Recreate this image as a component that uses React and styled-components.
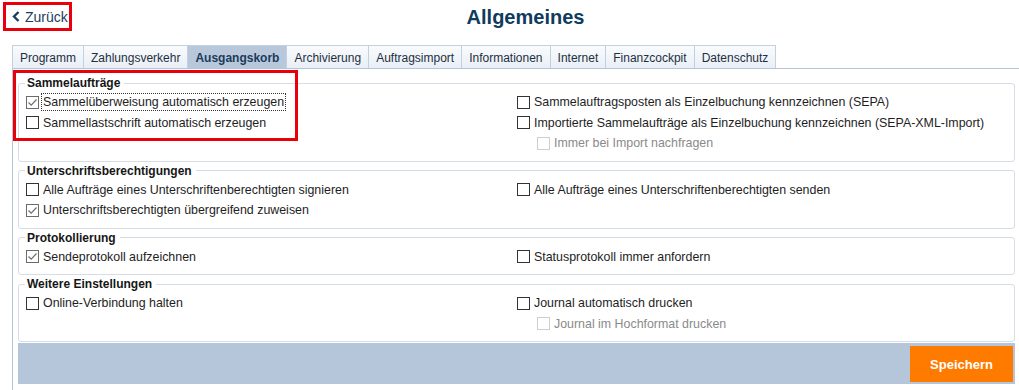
import React from "react";
import styled, { createGlobalStyle } from "styled-components";

const GlobalStyle = createGlobalStyle`
  html, body {
    margin: 0;
    padding: 0;
    background: #ffffff;
    font-family: "Liberation Sans", Arial, sans-serif;
  }
`;

const sections = [
  {
    title: "Sammelaufträge",
    left: [
      { label: "Sammelüberweisung automatisch erzeugen", checked: true, focus: true },
      { label: "Sammellastschrift automatisch erzeugen" },
    ],
    right: [
      { label: "Sammelauftragsposten als Einzelbuchung kennzeichnen (SEPA)" },
      { label: "Importierte Sammelaufträge als Einzelbuchung kennzeichnen (SEPA-XML-Import)" },
      { label: "Immer bei Import nachfragen", disabled: true, sub: true },
    ],
  },
  {
    title: "Unterschriftsberechtigungen",
    left: [
      { label: "Alle Aufträge eines Unterschriftenberechtigten signieren" },
      { label: "Unterschriftsberechtigten übergreifend zuweisen", checked: true },
    ],
    right: [{ label: "Alle Aufträge eines Unterschriftenberechtigten senden" }],
  },
  {
    title: "Protokollierung",
    left: [{ label: "Sendeprotokoll aufzeichnen", checked: true }],
    right: [{ label: "Statusprotokoll immer anfordern" }],
  },
  {
    title: "Weitere Einstellungen",
    left: [{ label: "Online-Verbindung halten" }],
    right: [
      { label: "Journal automatisch drucken" },
      { label: "Journal im Hochformat drucken", disabled: true, sub: true },
    ],
  },
];

const tabs = [
  "Programm",
  "Zahlungsverkehr",
  "Ausgangskorb",
  "Archivierung",
  "Auftragsimport",
  "Informationen",
  "Internet",
  "Finanzcockpit",
  "Datenschutz",
];

const Check = ({ checked, disabled }) => (
  <Box $checked={checked} $disabled={disabled}>
    {checked && (
      <svg width="11" height="11" viewBox="0 0 11 11">
        <path d="M1.5 5.5 L4.2 8.2 L9.5 2.5" fill="none" stroke="#6f6f6f" strokeWidth="1.2" />
      </svg>
    )}
  </Box>
);

const App = () => {
  return (
    <Page>
      <GlobalStyle />
      <Header>
        <BackButton>
          <svg width="9" height="11" viewBox="0 0 9 11">
            <path d="M6.5 1 L2 5.5 L6.5 10" fill="none" stroke="#1d3d5c" strokeWidth="2.4" />
          </svg>
          Zurück
        </BackButton>
        <Title>Allgemeines</Title>
      </Header>

      <TabBar>
        {tabs.map((t) => (
          <Tab key={t} $active={t === "Ausgangskorb"}>
            {t}
          </Tab>
        ))}
      </TabBar>

      <Panel>
        {sections.map((s) => (
          <Group key={s.title}>
            <Legend>{s.title}</Legend>
            <Columns>
              {[s.left, s.right].map((col, ci) => (
                <Column key={ci}>
                  {col.map((item) => (
                    <Row key={item.label} $sub={item.sub}>
                      <Check checked={item.checked} disabled={item.disabled} />
                      <Label $disabled={item.disabled} $focus={item.focus}>
                        {item.label}
                      </Label>
                    </Row>
                  ))}
                </Column>
              ))}
            </Columns>
          </Group>
        ))}
        <ActionBar>
          <SaveButton>Speichern</SaveButton>
        </ActionBar>
      </Panel>

      <Highlight />
    </Page>
  );
};

const Page = styled.div`
  position: relative;
  width: 1019px;
  height: 390px;
  overflow: hidden;
`;

const Header = styled.div`
  display: flex;
  align-items: flex-start;
  padding: 2px 0 0 3px;
  height: 31px;
`;

const BackButton = styled.div`
  box-sizing: border-box;
  width: 69px;
  height: 29px;
  border: 3px solid #e8000b;
  display: flex;
  align-items: center;
  gap: 4px;
  padding-left: 6px;
  font-size: 14px;
  color: #1d3d5c;
`;

const Title = styled.h1`
  flex: 1;
  margin: 0;
  padding: 4px 40px 0 0;
  text-align: center;
  font-size: 20px;
  font-weight: bold;
  color: #0f3b5d;
`;

const TabBar = styled.div`
  display: flex;
  margin: 12px 0 0 12px;
  border-bottom: 1px solid #b6c6d8;
`;

const Tab = styled.div`
  height: 23px;
  box-sizing: border-box;
  display: flex;
  align-items: center;
  padding: 1px 7px 0;
  margin-right: -1px;
  border: 1px solid #c3d1df;
  border-bottom: none;
  font-size: 12px;
  color: ${(p) => (p.$active ? "#1b3c5a" : "#1f2f3f")};
  font-weight: ${(p) => (p.$active ? "bold" : "normal")};
  background: ${(p) =>
    p.$active ? "#b8c8da" : "linear-gradient(#f9fbfd, #e9eff6)"};
`;

const Panel = styled.div`
  margin-left: 12px;
  border-left: 1px solid #b6c6d8;
  padding: 5px 4px 10px 5px;
`;

const Group = styled.fieldset`
  margin: 2px 0 0;
  padding: 0 6px 7px;
  border: 1px solid #d6dde5;
  border-radius: 3px;
  min-width: 0;
`;

const Legend = styled.legend`
  padding: 0 4px 0 2px;
  font-size: 12px;
  line-height: 14px;
  font-weight: bold;
  color: #161616;
`;

const Columns = styled.div`
  display: grid;
  grid-template-columns: 1fr 1fr;
  padding: 2px 0 0 1px;
`;

const Column = styled.div`
  display: flex;
  flex-direction: column;
`;

const Row = styled.div`
  height: 20.5px;
  display: flex;
  align-items: center;
  padding-left: ${(p) => (p.$sub ? "20px" : "0")};
`;

const Box = styled.span`
  box-sizing: border-box;
  width: 13px;
  height: 13px;
  flex-shrink: 0;
  display: flex;
  align-items: center;
  justify-content: center;
  background: #fff;
  border: 1px solid
    ${(p) => (p.$disabled ? "#cfcfcf" : p.$checked ? "#6b6b6b" : "#333333")};
`;

const Label = styled.span`
  margin-left: 2px;
  padding: 1px 1px;
  font-size: 12.4px;
  color: ${(p) => (p.$disabled ? "#8a8a8a" : "#1e1e1e")};
  border: 1px dotted ${(p) => (p.$focus ? "#333" : "transparent")};
`;

const ActionBar = styled.div`
  margin-top: 1px;
  height: 41px;
  box-sizing: border-box;
  padding: 3px 2px 2px;
  background: #b5c5da;
  display: flex;
  justify-content: flex-end;
`;

const SaveButton = styled.div`
  width: 103px;
  height: 36px;
  background: #ff7b00;
  color: #fff;
  font-weight: bold;
  font-size: 13px;
  display: flex;
  align-items: center;
  justify-content: center;
`;

const Highlight = styled.div`
  position: absolute;
  left: 13px;
  top: 70px;
  width: 279px;
  height: 65px;
  border: 3px solid #e8000b;
  pointer-events: none;
`;

export default App;
